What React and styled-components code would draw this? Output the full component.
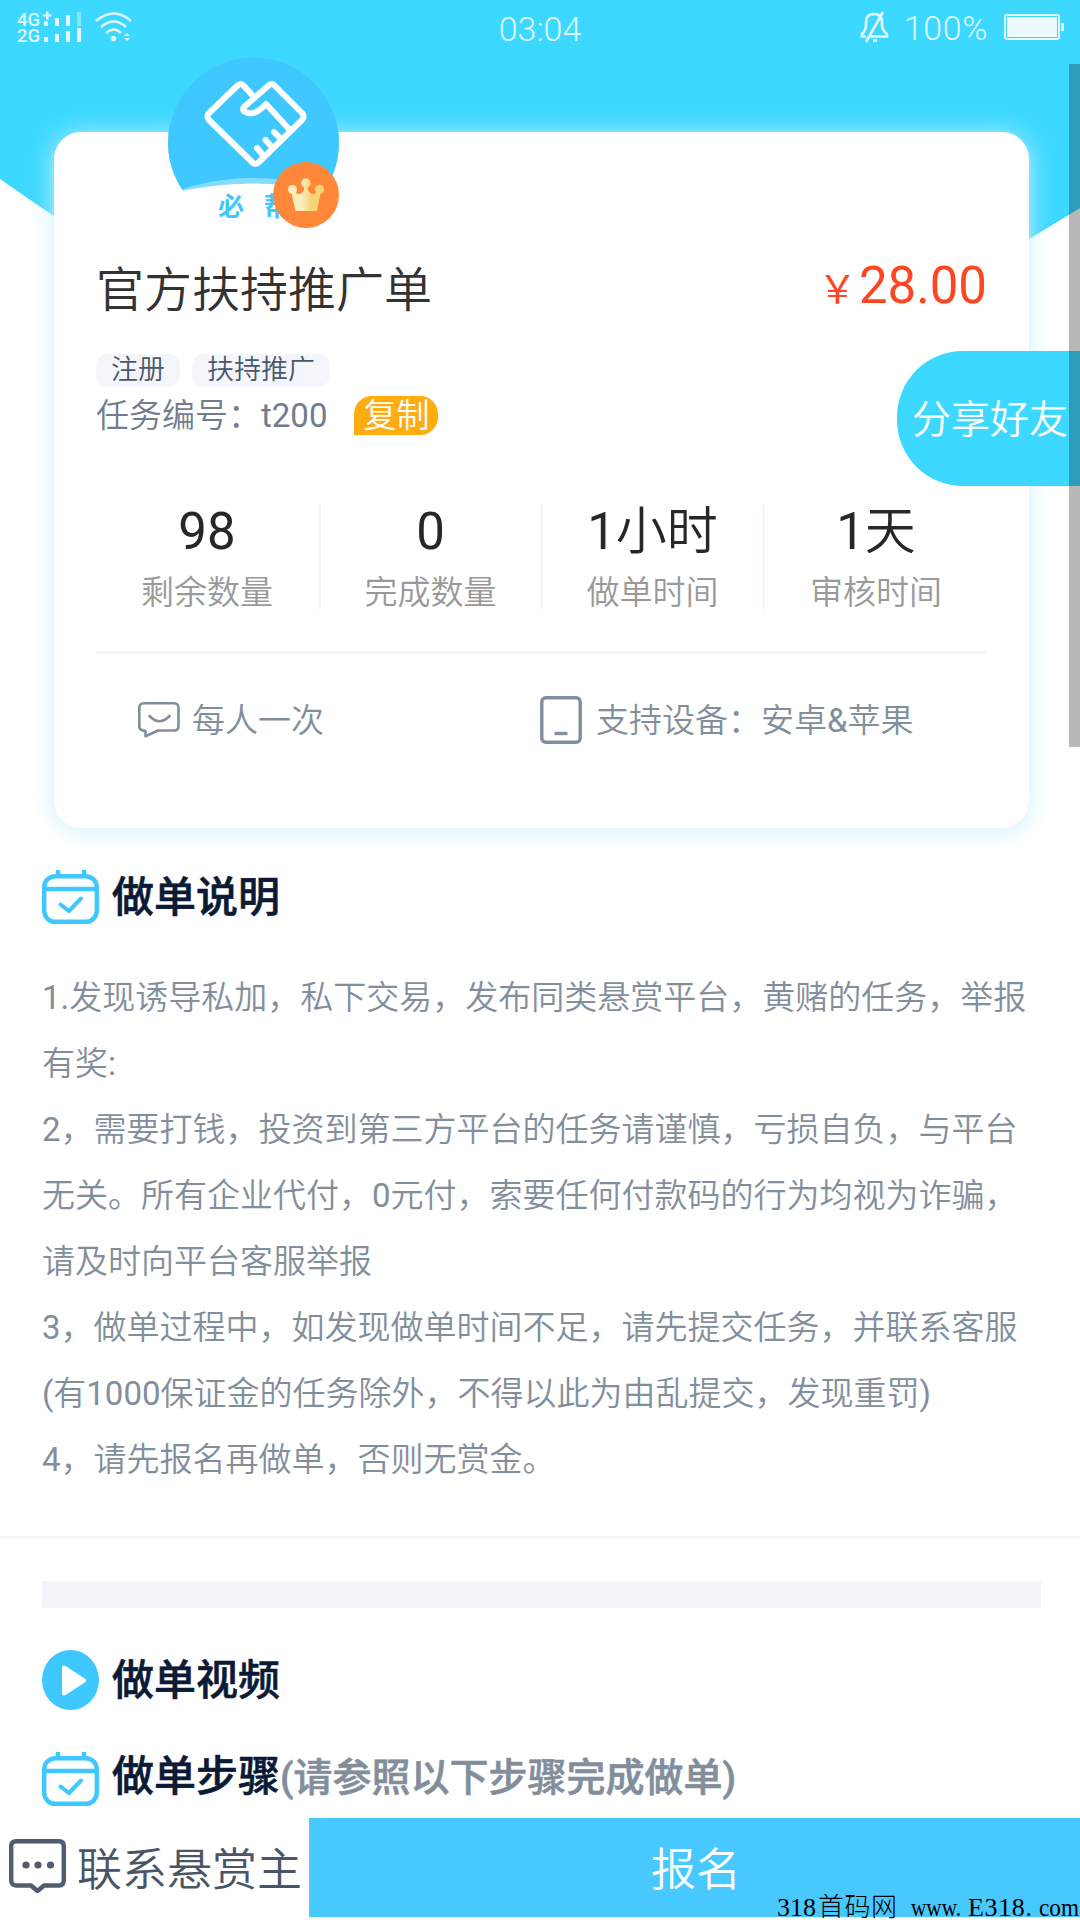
import React from 'react';
import styled, { createGlobalStyle, css } from 'styled-components';

const cyan = '#3dd8ff';
const blue = '#3ec8ff';
const slate = '#838e9d';
const navy = '#0b1a35';

const GlobalStyle = createGlobalStyle`
  * {
    box-sizing: border-box;
  }
  body {
    margin: 0;
    background: #fff;
    font-family: Roboto, 'Noto Sans CJK SC', sans-serif;
    font-weight: 350;
  }
  svg {
    display: block;
    flex: none;
  }
`;

const Page = styled.div`
  position: relative;
  display: flex;
  flex-direction: column;
  width: 1080px;
  height: 1920px;
  overflow: hidden;
  background: #fff;
`;

const HeaderShape = styled.svg`
  position: absolute;
  top: 0;
  left: 0;
`;

const StatusBar = styled.header`
  position: relative;
  display: grid;
  grid-template-columns: 1fr auto 1fr;
  height: 60px;
  padding: 0 16px;
  color: rgba(255, 255, 255, 0.85);
  font-size: 34px;
  font-weight: 300;
  line-height: 59px;
`;

const StatusRight = styled.div`
  display: flex;
  justify-content: flex-end;
  line-height: 56px;
`;

const Percent = styled.span`
  margin: 0 16px 0 15px;
  letter-spacing: 0.6px;
`;

const Card = styled.section`
  position: relative;
  height: 696px;
  margin: 72px 51px 0 54px;
  padding: 126px 42px 0;
  border-radius: 27px;
  background: #fff;
  box-shadow: 0 3px 24px #cdf1ff;
`;

const Avatar = styled.div`
  position: absolute;
  top: -75px;
  left: 114px;
  width: 171px;
  height: 171px;
`;

const Badge = styled.div`
  position: absolute;
  right: 0;
  bottom: 0;
`;

const TitleRow = styled.div`
  display: flex;
  justify-content: space-between;
  height: 66px;
  line-height: 66px;
`;

const Title = styled.h1`
  margin: 0;
  color: #333;
  font-size: 48px;
  font-weight: 350;
`;

const Price = styled.div`
  color: #ff4622;
  font-size: 51px;
  font-weight: 400;
  line-height: 56px;
`;

const Yen = styled.span`
  margin-right: 2px;
  font-size: 39px;
`;

const Tags = styled.div`
  display: flex;
  gap: 12px;
  margin-top: 30px;
`;

const Tag = styled.span`
  height: 33px;
  padding: 0 15px;
  border-radius: 12px;
  background: #f5f6fb;
  color: #4b586a;
  font-size: 27px;
  line-height: 32px;
`;

const NumberRow = styled.div`
  display: flex;
  height: 39px;
  margin-top: 9px;
  color: #727c8e;
  font-size: 33px;
  line-height: 39px;
`;

const CopyButton = styled.button`
  width: 84px;
  height: 39px;
  margin-left: 27px;
  padding: 0;
  border: 0;
  border-radius: 18px 18px 18px 0;
  background: #ffac10;
  color: #fff;
  font: inherit;
`;

const Stats = styled.div`
  display: grid;
  grid-template-columns: 222px 222px 222px 1fr;
  margin-top: 69px;
  padding-bottom: 42px;
  border-bottom: 3px solid #f5f6fa;
`;

const Stat = styled.div`
  height: 105px;
  text-align: center;

  & + & {
    border-left: 3px solid #f5f6fb;
  }
`;

const StatValue = styled.div`
  color: #272727;
  font-size: 51px;
  line-height: 56px;
`;

const StatLabel = styled.div`
  margin-top: 9px;
  color: #999;
  font-size: 33px;
  line-height: 48px;
`;

const Regular = styled.span`
  font-weight: 400;
`;

const Facts = styled.div`
  display: grid;
  grid-template-columns: 402px 1fr;
  padding: 42px 42px 0;
  color: ${slate};
  font-size: 33px;
  line-height: 48px;
`;

const Fact = styled.div`
  display: flex;
  align-items: center;
  height: 48px;
  gap: ${({ gap }) => gap}px;
`;

const FactText = styled.span`
  padding-top: 2px;
`;

const Share = styled.button`
  position: absolute;
  top: 351px;
  right: 0;
  width: 183px;
  height: 135px;
  padding: 0 0 6px 15px;
  border: 0;
  border-radius: 66px 0 0 66px;
  background: ${cyan};
  color: #fff;
  font: inherit;
  font-size: 39px;
  text-align: left;
  white-space: nowrap;
`;

const Heading = styled.h2`
  display: flex;
  align-items: center;
  height: 60px;
  margin: ${({ top }) => top}px 0 0 42px;
  color: ${navy};
  font-size: 42px;
  font-weight: 500;
  line-height: 56px;
  -webkit-text-stroke: 0.6px currentColor;

  svg {
    margin-right: 13px;
  }
`;

const HeadingText = styled.span`
  padding-top: 2px;
`;

const StepsText = styled.span`
  padding-bottom: 3px;
`;

const Hint = styled.span`
  color: ${slate};
  font-size: 39px;
`;

const Rules = styled.div`
  margin: 37px 0 0;
  padding: 1px 38px 43px 42px;
  border-bottom: 3px solid #f5f5f6;
  color: ${slate};
  font-size: 33px;
  line-height: 66px;
`;

const Rule = styled.div`
  white-space: nowrap;
`;

const Spacer = styled.div`
  height: 27px;
  margin: 42px 39px 0 42px;
  background: #f4f5f8;
`;

const Footer = styled.footer`
  position: absolute;
  bottom: 0;
  left: 0;
  display: flex;
  width: 100%;
  height: 102px;
  padding-bottom: 3px;
  background: #fff;
  font-size: 45px;
`;

const footerItem = css`
  display: flex;
  align-items: center;
  height: 99px;
  padding: 0 0 2px;
`;

const Contact = styled.div`
  ${footerItem}
  gap: 11px;
  width: 309px;
  padding-left: 9px;
  color: #4b5565;
  white-space: nowrap;

  svg {
    margin-bottom: 1px;
  }
`;

const Signup = styled.button`
  ${footerItem}
  flex: 1;
  justify-content: center;
  padding-left: 3px;
  border: 0;
  background: #47c9ff;
  color: #fff;
  font: inherit;
`;

const Stamp = styled.svg`
  position: absolute;
  right: 0;
  bottom: 0;
`;

const Scrollbar = styled.div`
  position: absolute;
  top: 64px;
  right: 0;
  width: 11px;
  height: 683px;
  background: rgba(0, 0, 0, 0.28);
`;

const SignalIcons = () => (
  <svg width="120" height="60" fill="#fff" fillOpacity="0.85">
    <g fontFamily="Roboto" fontSize="18.5" fontWeight="500">
      <text x="1" y="26">4G</text>
      <text x="1" y="42">2G</text>
    </g>
    <path d="M27 14.500h3v-3h2.500v3h3v2h-3v3h-2.500v-3h-3z" />
    <path d="M28 21h4v5h-4zM39 18h4v8h-4zM50 15h4v11h-4zM28 37h4v5h-4zM39 34h4v8h-4zM50 31h4v11h-4zM61 28h4v14h-4z" />
    <path d="M61 12h4v14h-4z" opacity="0.45" />
    <g fill="none" stroke="#fff" strokeOpacity="0.85" strokeWidth="2.6">
      <path d="M80 21Q98 6 115 21M85 27Q98 16 110 27M90 33Q98 26 105 33" />
    </g>
    <circle cx="97.500" cy="38.500" r="2.700" />
    <path d="M108 36l3-3 3 3zM108 38l3 3 3-3z" />
  </svg>
);

const MuteIcon = () => (
  <svg width="30" height="60" fill="none" stroke="#fff" strokeOpacity="0.85" strokeWidth="2.600">
    <path d="M7 36.500H3V34Q7 30 7 25V22Q7 14 15 14Q23 14 23 22V25Q23 30 28 34V36.500H10" />
    <path d="M24 12L7 42M14 40.500H18" />
  </svg>
);

const BatteryIcon = () => (
  <svg width="60" height="60">
    <rect x="1" y="15" width="54" height="24" rx="2" fill="none" stroke="#fff" strokeOpacity="0.85" strokeWidth="2" />
    <rect x="3" y="17" width="50" height="20" fill="#fff" fillOpacity="0.9" />
    <rect x="57" y="23" width="3" height="8" fill="#fff" fillOpacity="0.9" />
  </svg>
);

const Logo = () => (
  <svg width="171" height="171">
    <defs>
      <clipPath id="band">
        <path d="M0 0H171V137Q85 116 0 137Z" />
      </clipPath>
      <clipPath id="sky">
        <path d="M0 0H171V137Q85 105 0 137Z" />
      </clipPath>
    </defs>
    <circle cx="85.500" cy="85.500" r="85.500" fill="#86dcff" clipPath="url(#band)" />
    <circle cx="85.500" cy="85.500" r="85.500" fill={blue} clipPath="url(#sky)" />
    <text x="50" y="159" fill={blue} fontSize="26" fontWeight="700" letterSpacing="20">
      必帮
    </text>
    <g fill="none" stroke="#fff" strokeWidth="6" strokeLinecap="round" strokeLinejoin="round">
      <path d="M86 40L76 29Q72.500 25 69 29L41 56Q38 59.500 41 63L84 105Q87.500 109 91 105L134 63Q137 59.500 134 56L107 29Q103.500 25 100 29L76 50Q73 54 80 56Q88 58 98 47L121 72" />
      <path d="M89 91L95 98M97.500 83L104 90M106 75L113 82" />
    </g>
  </svg>
);

const CrownIcon = () => (
  <svg width="66" height="66">
    <defs>
      <linearGradient id="gold" gradientUnits="userSpaceOnUse" x1="29" x2="38">
        <stop offset="0" stopColor="#fdedbd" />
        <stop offset="1" stopColor="#f5d475" />
      </linearGradient>
    </defs>
    <circle cx="33" cy="33" r="33" fill="#ff873a" />
    <g fill="url(#gold)">
      <circle cx="33" cy="21" r="4.700" />
      <circle cx="19.500" cy="27.500" r="4.500" />
      <circle cx="46.500" cy="27.500" r="4.500" />
      <path d="M18.500 31L22.500 27Q22 32 26 32Q31 32 31.500 24H34.500Q35 32 40 32Q44 32 43.500 27L47.500 31L44 49H22.500Z" />
    </g>
  </svg>
);

const BubbleIcon = () => (
  <svg width="42" height="36" fill="none" stroke={slate} strokeWidth="2.600" strokeLinecap="round" strokeLinejoin="round">
    <path d="M6 1.300H36Q40.500 1.300 40.500 6V24Q40.500 28.500 36 28.500H20L7.500 34.300V29Q1.300 28.500 1.300 24V6Q1.300 1.300 6 1.300Z" />
    <path d="M11.500 14Q21.500 24.500 31.500 14" />
  </svg>
);

const DeviceIcon = () => (
  <svg width="42" height="48" fill="none" stroke={slate} strokeWidth="3.400">
    <rect x="1.800" y="1.800" width="38.400" height="44.400" rx="4" />
    <path d="M14.500 37.500H27.500" />
  </svg>
);

const CalendarIcon = () => (
  <svg width="57" height="54" fill="none" stroke={blue} strokeWidth="4.400">
    <rect x="2.200" y="6.200" width="52.600" height="45.600" rx="11" />
    <path d="M2 19H55M16 0V7M42 0V7" />
    <path d="M18.500 34.500L27 41L39 28.500" strokeWidth="4" strokeLinecap="round" />
  </svg>
);

const PlayIcon = () => (
  <svg width="57" height="60">
    <ellipse cx="28.500" cy="30" rx="28.500" ry="30" fill={blue} />
    <path d="M22 17.500L42 30.500L22 43.500Z" fill="#fff" stroke="#fff" strokeWidth="4" strokeLinejoin="round" />
  </svg>
);

const MessageIcon = () => (
  <svg width="57" height="54" fill="none" stroke="#515c6e" strokeWidth="4.400" strokeLinejoin="round">
    <path d="M7 2.200H50Q54.800 2.200 54.800 7V41Q54.800 46.500 50 46.500H35L28.500 52L22 46.500H7Q2.200 46.500 2.200 41V7Q2.200 2.200 7 2.200Z" />
    <g fill="#515c6e" stroke="none">
      <circle cx="17" cy="26" r="3.600" />
      <circle cx="29" cy="26" r="3.600" />
      <circle cx="41.500" cy="26" r="3.600" />
    </g>
  </svg>
);

const Watermark = () => (
  <Stamp width="303" height="30" fontFamily="'Liberation Serif', 'Noto Sans CJK SC', serif" fontSize="26" fontWeight="300">
    <text x="0" y="26" textLength="39">318</text>
    <text x="41" y="26" textLength="79">首码网</text>
    <text x="134" y="26" textLength="50" lengthAdjust="spacingAndGlyphs">www.</text>
    <text x="191" y="26" textLength="64">E318.</text>
    <text x="262" y="26" textLength="40" lengthAdjust="spacingAndGlyphs">com</text>
  </Stamp>
);

// Latin letters and digits are one step heavier than the Chinese text around them
const Mixed = ({ children }) =>
  children
    .split(/([\x20-\x7e]+)/)
    .filter(Boolean)
    .map((part, i) =>
      /^[\x20-\x7e]/.test(part) ? <Regular key={i}>{part}</Regular> : part
    );

const stats = [
  { value: '98', label: '剩余数量' },
  { value: '0', label: '完成数量' },
  { value: '1小时', label: '做单时间' },
  { value: '1天', label: '审核时间' },
];

const rules = [
  '1.发现诱导私加，私下交易，发布同类悬赏平台，黄赌的任务，举报',
  '有奖:',
  '2，需要打钱，投资到第三方平台的任务请谨慎，亏损自负，与平台',
  '无关。所有企业代付，0元付，索要任何付款码的行为均视为诈骗，',
  '请及时向平台客服举报',
  '3，做单过程中，如发现做单时间不足，请先提交任务，并联系客服',
  '(有1000保证金的任务除外，不得以此为由乱提交，发现重罚)',
  '4，请先报名再做单，否则无赏金。',
];

const App = () => (
  <Page>
    <GlobalStyle />
    <HeaderShape width="1080" height="420">
      <path d="M0 0H1080V208Q1054 224 1029 239Q540 520 54 216Q27 198 0 179Z" fill={cyan} />
    </HeaderShape>
    <StatusBar>
      <SignalIcons />
      <span>03:04</span>
      <StatusRight>
        <MuteIcon />
        <Percent>100%</Percent>
        <BatteryIcon />
      </StatusRight>
    </StatusBar>

    <Card>
      <Avatar>
        <Logo />
        <Badge>
          <CrownIcon />
        </Badge>
      </Avatar>
      <TitleRow>
        <Title>官方扶持推广单</Title>
        <Price>
          <Yen>￥</Yen>28.00
        </Price>
      </TitleRow>
      <Tags>
        <Tag>注册</Tag>
        <Tag>扶持推广</Tag>
      </Tags>
      <NumberRow>
        <span>
          <Mixed>任务编号：t200</Mixed>
        </span>
        <CopyButton>复制</CopyButton>
      </NumberRow>
      <Stats>
        {stats.map(({ value, label }) => (
          <Stat key={label}>
            <StatValue>
              <Mixed>{value}</Mixed>
            </StatValue>
            <StatLabel>{label}</StatLabel>
          </Stat>
        ))}
      </Stats>
      <Facts>
        <Fact gap={12}>
          <BubbleIcon />
          <FactText>每人一次</FactText>
        </Fact>
        <Fact gap={14}>
          <DeviceIcon />
          <FactText>
            <Mixed>支持设备：安卓&amp;苹果</Mixed>
          </FactText>
        </Fact>
      </Facts>
    </Card>

    <Heading top={39}>
      <CalendarIcon />
      <HeadingText>做单说明</HeadingText>
    </Heading>
    <Rules>
      {rules.map((rule) => (
        <Rule key={rule}>
          <Mixed>{rule}</Mixed>
        </Rule>
      ))}
    </Rules>
    <Spacer />
    <Heading top={42}>
      <PlayIcon />
      <HeadingText>做单视频</HeadingText>
    </Heading>
    <Heading top={39}>
      <CalendarIcon />
      <StepsText>
        做单步骤<Hint>(请参照以下步骤完成做单)</Hint>
      </StepsText>
    </Heading>

    <Footer>
      <Contact>
        <MessageIcon />
        联系悬赏主
      </Contact>
      <Signup>报名</Signup>
      <Watermark />
    </Footer>
    <Share>分享好友</Share>
    <Scrollbar />
  </Page>
);

export default App;
